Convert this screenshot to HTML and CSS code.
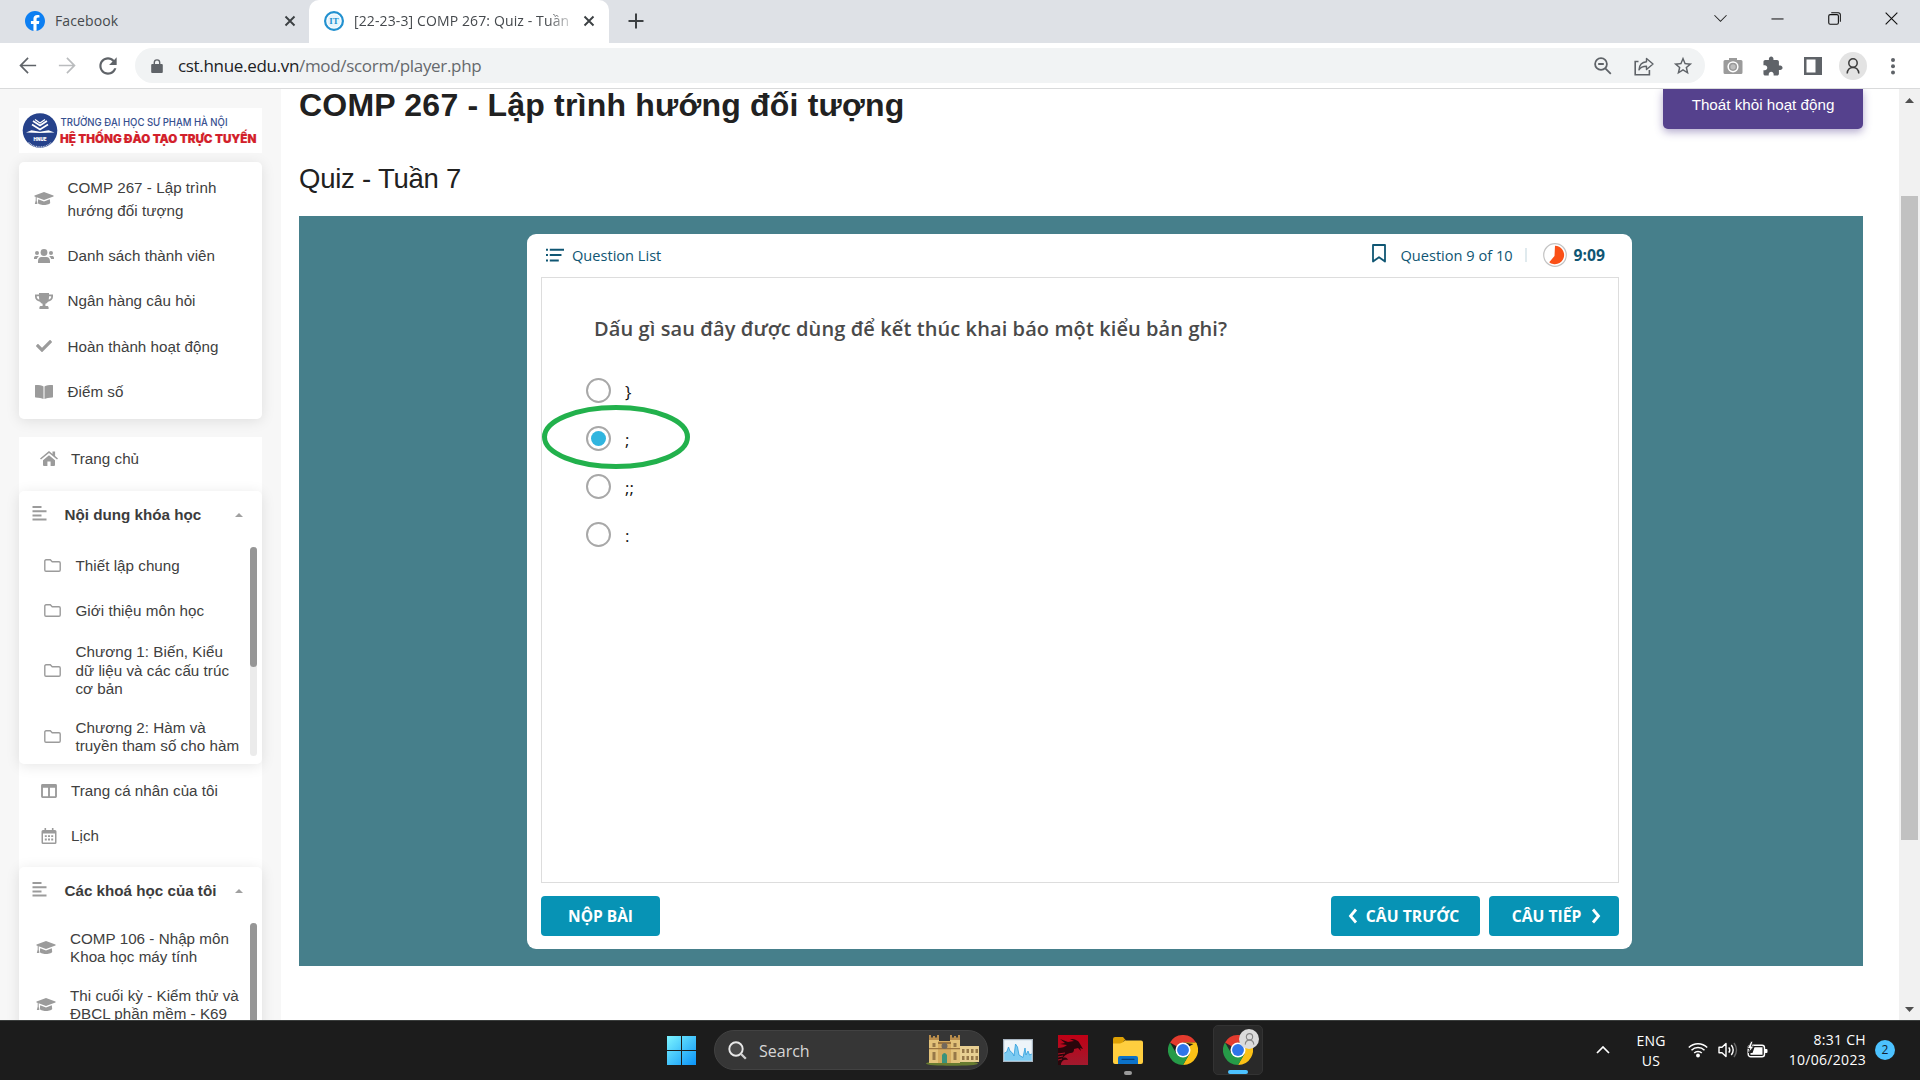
FILE: index.html
```html
<!DOCTYPE html>
<html lang="vi">
<head>
<meta charset="utf-8">
<title>[22-23-3] COMP 267: Quiz - Tuần 7</title>
<link rel="stylesheet" href="styles.css">
</head>
<body>
<svg class="defs" width="0" height="0" aria-hidden="true">
  <symbol id="cap" viewBox="0 0 20 14">
    <path d="M10 0 .6 3.6a.5.5 0 0 0 0 .9L10 8l9.4-3.5a.5.5 0 0 0 0-.9z"/>
    <path d="M4.2 7.2 10 9.4l5.8-2.2.4 3.5c0 1.2-2.8 2.2-6.2 2.2s-6.200-1-6.200-2.200z"/>
    <path d="M1.700 4.800h1v3.700l.7 3.500H.8l.9-3.500z"/>
  </symbol>
  <symbol id="folder" viewBox="0 0 17 13">
    <path d="M2 .8h4.300L8.200 2.700H15A1.200 1.200 0 0 1 16.200 3.900V11A1.200 1.200 0 0 1 15 12.200H2A1.200 1.200 0 0 1 .8 11V2A1.200 1.200 0 0 1 2 .8z" fill="none" stroke="currentColor" stroke-width="1.400"/>
  </symbol>
  <symbol id="lines" viewBox="0 0 14 15">
    <path d="M0 0h9v2H0zM0 4.200h14v2H0zM0 8.400h9v2H0zM0 12.600h14v2H0z"/>
  </symbol>
  <symbol id="person" viewBox="0 0 14 16">
    <circle cx="7" cy="5" r="4.200" fill="none" stroke="currentColor" stroke-width="1.500"/>
    <path d="M1.200 15.500c.3-4 2.200-6 5.800-6s5.500 2 5.800 6" fill="none" stroke="currentColor" stroke-width="1.500"/>
  </symbol>
  <symbol id="close" viewBox="0 0 12 12">
    <path d="M1.500 1.500l9 9M10.500 1.500l-9 9" fill="none" stroke="currentColor" stroke-width="1.900"/>
  </symbol>
  <symbol id="chrome" viewBox="0 0 48 48">
    <path d="M24 24 3.200 12A24 24 0 0 1 44.800 12H24z" fill="#e33b2e"/>
    <path d="M24 24 44.800 12A24 24 0 0 1 24 48l10.400-18z" fill="#fbc116"/>
    <path d="M24 24 34.400 30 24 48A24 24 0 0 1 3.200 12l10.400 18z" fill="#269b48"/>
    <path d="M24 12h20.800a24 24 0 0 1 1.500 3z" fill="#fbc116"/>
    <circle cx="24" cy="24" r="12" fill="#fff"/>
    <circle cx="24" cy="24" r="9.500" fill="#2e75ea"/>
  </symbol>
</svg>

<header class="browser">
  <div class="tabstrip">
    <div class="tab">
      <svg class="favicon" viewBox="0 0 24 24"><circle cx="12" cy="12" r="11" fill="#fff"/><path fill="#0d7ff2" d="M24 12.070C24 5.400 18.630 0 12 0S0 5.400 0 12.070C0 18.100 4.390 23.100 10.130 24v-8.440H7.080v-3.490h3.040V9.410c0-3.020 1.800-4.700 4.540-4.700 1.310 0 2.680.24 2.680.24v2.970h-1.500c-1.500 0-1.960.93-1.960 1.890v2.260h3.330l-.53 3.490h-2.800V24C19.610 23.100 24 18.100 24 12.070z"/></svg>
      <span class="tab-title fb">Facebook</span>
      <svg class="tab-close"><use href="#close"/></svg>
    </div>
    <div class="tab active">
      <svg class="favicon" viewBox="0 0 20 20"><circle cx="10" cy="10" r="8.900" fill="#fff" stroke="#2291d0" stroke-width="2.200"/><circle cx="10" cy="10" r="6.800" fill="#e6f4fc"/><text x="10" y="13.300" text-anchor="middle" class="it-mark">IT</text></svg>
      <span class="tab-title">[22-23-3] COMP 267: Quiz - Tuần</span>
      <svg class="tab-close"><use href="#close"/></svg>
    </div>
    <svg class="newtab" viewBox="0 0 16 16"><path d="M8 .5v15M.5 8h15" stroke="#3c4043" stroke-width="2"/></svg>
    <div class="winctl">
      <svg viewBox="0 0 14 14"><path d="M.5 3.500 7 10l6.500-6.500" fill="none" stroke="#222" stroke-width="1.100"/></svg>
      <svg viewBox="0 0 14 14"><path d="M.5 7.500h13" stroke="#111" stroke-width="1.100"/></svg>
      <svg viewBox="0 0 14 14"><rect x=".8" y="2.800" width="10.400" height="10.400" rx="1.600" fill="none" stroke="#111" stroke-width="1.200"/><path d="M3.500.7H11a2.300 2.300 0 0 1 2.300 2.300v7.500" fill="none" stroke="#111" stroke-width="1.100"/></svg>
      <svg viewBox="0 0 14 14"><path d="M.7.7l12.600 12.600M13.300.7.7 13.300" stroke="#111" stroke-width="1.200"/></svg>
    </div>
  </div>
  <div class="toolbar">
    <svg class="nav" viewBox="0 0 24 24"><path fill="#5f6368" d="M21 11.100H6.800l6.400-6.400L12 3.500 3.500 12l8.500 8.500 1.200-1.200-6.400-6.400H21z"/></svg>
    <svg class="nav" viewBox="0 0 24 24"><path fill="#babcbe" d="M3 11.100h14.200l-6.400-6.400L12 3.500l8.500 8.500-8.500 8.500-1.200-1.200 6.400-6.400H3z"/></svg>
    <svg class="nav" viewBox="0 0 24 24"><path fill="#5f6368" d="M17.650 6.350C16.200 4.900 14.210 4 12 4c-4.420 0-7.990 3.580-7.990 8s3.570 8 7.990 8c3.730 0 6.840-2.550 7.730-6h-2.080c-.82 2.330-3.040 4-5.650 4-3.310 0-6-2.690-6-6s2.690-6 6-6c1.660 0 3.140.69 4.220 1.780L13 11h7V4l-2.350 2.350z"/></svg>
    <div class="omnibox">
      <svg class="lock" viewBox="0 0 12 14"><path fill="#5f6368" d="M1.200 5H2.600V3.600a3.400 3.400 0 0 1 6.800 0V5h1.400A1 1 0 0 1 11.800 6v7a1 1 0 0 1-1 1H1.200a1 1 0 0 1-1-1V6a1 1 0 0 1 1-1zM4 5h4V3.600a2 2 0 0 0-4 0z"/></svg>
      <span class="url"><b>cst.hnue.edu.vn</b>/mod/scorm/player.php</span>
      <svg class="oi" viewBox="0 0 20 20"><g fill="none" stroke="#5f6368" stroke-width="1.800"><circle cx="8" cy="8" r="5.900"/><path d="M12.300 12.300l5.500 5.500M5.200 8h5.600"/></g></svg>
      <svg class="oi" viewBox="0 0 20 20"><path d="M4.500 5.500H1.200v13.300h14.200V14" fill="none" stroke="#5f6368" stroke-width="1.600"/><path d="M12.500 2.500 19 8l-6.500 5.500v-3.200c-3.500 0-6 1-7.500 3.500.3-4.500 2.700-7.600 7.500-8z" fill="none" stroke="#5f6368" stroke-width="1.400" stroke-linejoin="round"/></svg>
      <svg class="oi star" viewBox="0 0 24 24"><path fill="#5f6368" d="M22 9.240l-7.190-.62L12 2 9.190 8.630 2 9.240l5.460 4.730L5.820 21 12 17.270 18.180 21l-1.630-7.030L22 9.240zM12 15.400l-3.760 2.270 1-4.280-3.320-2.880 4.380-.38L12 6.100l1.710 4.040 4.380.38-3.320 2.880 1 4.280L12 15.400z"/></svg>
    </div>
    <div class="exts">
      <svg viewBox="0 0 20 20"><path d="M2 4h4V2h8v2h4a1.500 1.500 0 0 1 1.500 1.500v11A1.500 1.500 0 0 1 18 18H2A1.500 1.500 0 0 1 .5 16.500v-11A1.500 1.500 0 0 1 2 4z" fill="#9b9b9b"/><circle cx="10" cy="10.800" r="5.600" fill="#fff"/><circle cx="10" cy="10.800" r="4.100" fill="#9b9b9b"/><circle cx="10" cy="10.800" r="2.600" fill="#fff" opacity=".35"/></svg>
      <svg viewBox="1.500 .5 22 22"><path fill="#5f6368" d="M20.500 11H19V7c0-1.100-.9-2-2-2h-4V3.500C13 2.120 11.880 1 10.500 1S8 2.120 8 3.500V5H4c-1.100 0-1.990.9-1.990 2v3.800H3.500c1.490 0 2.700 1.210 2.700 2.700s-1.210 2.700-2.700 2.700H2V20c0 1.100.9 2 2 2h3.800v-1.500c0-1.490 1.210-2.700 2.700-2.700 1.490 0 2.700 1.210 2.700 2.700V22H17c1.100 0 2-.9 2-2v-4h1.500c1.380 0 2.500-1.120 2.500-2.500S21.880 11 20.500 11z"/></svg>
      <svg viewBox="0 0 20 20"><path fill="#5f6368" fill-rule="evenodd" d="M1 1h18v18H1zM3.500 3.500v13h9v-13z"/></svg>
      <span class="profile"><svg><use href="#person"/></svg></span>
      <svg viewBox="0 0 20 20"><g fill="#5f6368"><circle cx="10" cy="4" r="2"/><circle cx="10" cy="10.200" r="2"/><circle cx="10" cy="16.400" r="2"/></g></svg>
    </div>
  </div>
</header>

<div class="viewport">
  <aside class="sidebar">
    <div class="brand">
      <svg width="243" height="45" viewBox="0 0 243 45">
        <circle cx="21" cy="22.500" r="17.300" fill="#26428b"/>
        <g fill="none" stroke="#fff" stroke-width="1.700"><path d="M14 13l7 4.500 7-4.500M13 16.500l8 5 8-5"/><path d="M16 11.500l5 3.500 5-3.500" stroke-width="1.200"/></g>
        <path d="M7 24.500l5.500-2.200 8.500 1.400 8.500-1.400 6 2.200-14.500.6z" fill="#fff"/>
        <text x="21" y="32.800" text-anchor="middle" class="crest">HNUE</text>
        <path d="M9.500 34.500a17 17 0 0 0 23 0" fill="none" stroke="#fff" stroke-width="1.300" stroke-dasharray="1 .7" opacity=".75"/>
        <text x="41.500" y="18" textLength="167" lengthAdjust="spacingAndGlyphs" class="brand-a">TRƯỜNG ĐẠI HỌC SƯ PHẠM HÀ NỘI</text>
        <text x="41" y="34.500" textLength="196.500" lengthAdjust="spacingAndGlyphs" class="brand-b">HỆ THỐNG ĐÀO TẠO TRỰC TUYẾN</text>
      </svg>
    </div>

    <nav class="card course">
      <a class="two"><svg class="ic"><use href="#cap"/></svg><span>COMP 267 - Lập trình<br>hướng đối tượng</span></a>
      <a><svg class="ic" viewBox="0 0 20 14"><circle cx="10" cy="3.500" r="3.400"/><circle cx="3" cy="4" r="2"/><circle cx="17" cy="4" r="2"/><path d="M4 14v-1.800C4 9.500 5.500 8 7.500 8h5C14.500 8 16 9.500 16 12.200V14zM0 10V8.800C0 7.500 1 7 2 7h2.200l.6.500C3.600 8.300 3.100 9 2.900 10zM20 10V8.800c0-1.300-1-1.800-2-1.800h-2.200l-.6.500c1.200.8 1.700 1.500 1.900 2.500z"/></svg><span>Danh sách thành viên</span></a>
      <a><svg class="ic tall" viewBox="0 0 18 16"><path d="M4 0h10v1.500h4v2.300c0 2.500-2 4.300-5 4.900-.8 1.200-1.700 1.900-2.600 2.100V13H12c1 0 1.600.7 1.600 1.700V16H4.400v-1.300C4.400 13.700 5 13 6 13h1.600v-2.200C6.700 10.600 5.800 9.900 5 8.700 2 8.100 0 6.300 0 3.800V1.500h4zM1.800 3.200v.7c0 1.100.9 2.200 2.500 2.700C4.100 5.600 4 4.500 4 3.200zm14.400 0H14c0 1.300-.1 2.400-.3 3.400 1.600-.5 2.500-1.600 2.500-2.700z"/></svg><span>Ngân hàng câu hỏi</span></a>
      <a><svg class="ic tall" viewBox="0 0 512 512"><path d="M173.898 439.404l-166.400-166.400c-9.997-9.997-9.997-26.206 0-36.204l36.203-36.204c9.997-9.998 26.207-9.998 36.204 0L192 312.690 432.095 72.596c9.997-9.997 26.207-9.997 36.204 0l36.203 36.204c9.997 9.997 9.997 26.206 0 36.204l-294.400 294.401c-9.998 9.997-26.207 9.997-36.204-.001z"/></svg><span>Hoàn thành hoạt động</span></a>
      <a><svg class="ic" viewBox="0 0 18 14"><path d="M8.500 14V1.400C7 .4 4 0 .6 0A.6.6 0 0 0 0 .6v11.200c0 .4.2.6.6.6C4 12.600 6.800 13.100 8.500 14zM9.500 14V1.400C11 .4 14 0 17.400 0a.6.6 0 0 1 .6.6v11.200c0 .4-.2.6-.6.6-3.400.2-6.200.7-7.900 1.600z"/></svg><span>Điểm số</span></a>
    </nav>

    <nav class="menu">
      <a class="top"><svg class="ic home" viewBox="0 0 18 15"><path d="M9 4.300l6 5V14a1 1 0 0 1-1 1h-3.400v-4.500H7.400V15H4a1 1 0 0 1-1-1V9.300z"/><path d="M9 0l3.500 2.900V.4h2.600V5L18 7.400l-1 1.200L9 2.100l-8 6.500-1-1.200z"/></svg><span>Trang chủ</span></a>

      <section class="card group">
        <h4><svg class="li"><use href="#lines"/></svg><span>Nội dung khóa học</span><i class="caret"></i></h4>
        <div class="scroller">
          <div class="list">
            <a class="r1"><svg class="fo"><use href="#folder"/></svg><span>Thiết lập chung</span></a>
            <a class="r1"><svg class="fo"><use href="#folder"/></svg><span>Giới thiệu môn học</span></a>
            <a class="r3"><svg class="fo"><use href="#folder"/></svg><span>Chương 1: Biến, Kiểu<br>dữ liệu và các cấu trúc<br>cơ bản</span></a>
            <a class="r2"><svg class="fo"><use href="#folder"/></svg><span>Chương 2: Hàm và<br>truyền tham số cho hàm</span></a>
          </div>
          <div class="track"><div class="thumb"></div></div>
        </div>
      </section>

      <a class="top mine"><svg class="ic" viewBox="0 0 17 15"><path fill-rule="evenodd" d="M1.500 0h14A1.500 1.500 0 0 1 17 1.500v12a1.500 1.500 0 0 1-1.500 1.500h-14A1.500 1.500 0 0 1 0 13.500v-12A1.500 1.500 0 0 1 1.500 0zM2 4v9h5.500V4zM9.500 4v9H15V4z"/></svg><span>Trang cá nhân của tôi</span></a>
      <a class="top cal"><svg class="ic tall" viewBox="0 0 15 16"><path fill-rule="evenodd" d="M3 0h1.600v2h5.800V0H12v2h1.500A1.500 1.500 0 0 1 15 3.500v11a1.500 1.500 0 0 1-1.500 1.500h-12A1.500 1.500 0 0 1 0 14.500v-11A1.500 1.500 0 0 1 1.500 2H3zM1.500 5.500v9h12v-9z"/><path d="M3.300 7.200h2v1.900h-2zM6.500 7.200h2v1.900h-2zM9.700 7.200h2v1.900h-2zM3.300 10.500h2v1.900h-2zM6.500 10.500h2v1.900h-2zM9.700 10.500h2v1.900h-2z"/></svg><span>Lịch</span></a>

      <section class="card group last">
        <h4><svg class="li"><use href="#lines"/></svg><span>Các khoá học của tôi</span><i class="caret"></i></h4>
        <div class="scroller">
          <div class="list caps">
            <a><svg class="ic"><use href="#cap"/></svg><span>COMP 106 - Nhập môn<br>Khoa học máy tính</span></a>
            <a><svg class="ic"><use href="#cap"/></svg><span>Thi cuối kỳ - Kiểm thử và<br>ĐBCL phần mềm - K69</span></a>
          </div>
          <div class="track"><div class="thumb full"></div></div>
        </div>
      </section>
    </nav>
  </aside>

  <main class="content">
    <div class="headrow">
      <h1>COMP 267 - Lập trình hướng đối tượng</h1>
      <a class="exit">Thoát khỏi hoạt động</a>
    </div>
    <h2>Quiz - Tuần 7</h2>
    <div class="player">
      <div class="quiz">
        <div class="quiz-head">
          <svg class="qlist" viewBox="0 0 20 15"><path fill="#0f5673" d="M0 .5h2.200v2.200H0zM4.200.5H20v2.200H4.200zM0 6.500h2.200v2.200H0zM4.200 6.500h13v2.200h-13zM0 12.500h2.200v2.200H0zM4.200 12.500h10v2.200h-10z"/></svg>
          <span class="ql">Question List</span>
          <svg class="bm" viewBox="0 0 14 19"><path d="M1 1h12v16.500l-6-4.300-6 4.300z" fill="none" stroke="#0f5673" stroke-width="1.800" stroke-linejoin="round"/></svg>
          <span class="qn">Question 9 of 10</span>
          <i class="sep"></i>
          <svg class="pie" viewBox="0 0 24 24"><circle cx="12" cy="12" r="11.300" fill="#fff" stroke="#c4c4c4" stroke-width="1.200"/><path d="M12 2.800a9.200 9.200 0 1 1-5.800 16.400L11.500 13z" fill="#fa5017"/></svg>
          <b class="clock">9:09</b>
        </div>
        <div class="slide">
          <p class="question">Dấu gì sau đây được dùng để kết thúc khai báo một kiểu bản ghi?</p>
          <div class="options">
            <label><i class="radio"></i>}</label>
            <label><i class="radio on"></i>;</label>
            <label><i class="radio"></i>;;</label>
            <label><i class="radio"></i>:</label>
          </div>
          <svg class="marker" width="150" height="66" viewBox="0 0 150 66"><ellipse cx="75" cy="33" rx="71.500" ry="29.500" fill="none" stroke="#22b14c" stroke-width="5"/></svg>
        </div>
        <div class="quiz-foot">
          <span class="btn submit">NỘP BÀI</span>
          <span class="btn prev"><svg viewBox="0 0 10 16"><path d="M8 1.500 2.500 8 8 14.500" fill="none" stroke="#fff" stroke-width="2.800"/></svg>CÂU TRƯỚC</span>
          <span class="btn next">CÂU TIẾP<svg viewBox="0 0 10 16"><path d="M2 1.500 7.500 8 2 14.500" fill="none" stroke="#fff" stroke-width="2.800"/></svg></span>
        </div>
      </div>
    </div>
  </main>

  <div class="vscroll">
    <svg viewBox="0 0 9 5"><path d="M0 5 4.500 0 9 5z" fill="#505050"/></svg>
    <div class="vthumb"></div>
    <svg viewBox="0 0 9 5"><path d="M0 0l4.500 5L9 0z" fill="#505050"/></svg>
  </div>
</div>

<footer class="taskbar">
  <div class="apps">
    <svg class="win" viewBox="0 0 29 29"><defs><linearGradient id="wg" x1="0" y1="0" x2="1" y2="1"><stop offset="0" stop-color="#7df5ff"/><stop offset="1" stop-color="#0a93f8"/></linearGradient></defs><path fill="url(#wg)" d="M0 0h14v14H0zM15 0h14v14H15zM0 15h14v14H0zM15 15h14v14H15z"/></svg>
    <div class="search">
      <svg class="mag" viewBox="0 0 19 19"><circle cx="8" cy="8" r="6.700" fill="#4a4a4a" stroke="#e8e8e8" stroke-width="1.900"/><path d="M12.800 12.800l5 5" stroke="#d0d0d0" stroke-width="2.300"/></svg>
      <span>Search</span>
      <svg class="castle" viewBox="0 0 54 32"><ellipse cx="26" cy="29.500" rx="26" ry="2.300" fill="#687c30"/><path d="M3 6h10v23H3zM24 6h10v23H24z" fill="#e3c27a"/><path d="M3 6V1h2v2.500h2V2h2v1.500h2V1h2v5zM24 6V1h2v2.500h2V2h2v1.500h2V1h2v5z" fill="#b98d4c"/><path d="M12 7h13v22H12z" fill="#d4ab60"/><path d="M12 8h13v2H12zM3 14h31v1.200H3zM34 13h19v1H34z" fill="#9a7440"/><path d="M34 12h19v16H34z" fill="#e8cf92"/><circle cx="18.500" cy="12" r="3" fill="#71685c"/><path d="M16 21q2.500-4 5 0v8h-5z" fill="#3a927b"/><path d="M6.500 9h3v4h-3zM27.500 9h3v4h-3zM6.500 18h3v8h-3zM27.500 18h3v8h-3zM36 15h2.500v4H36zM40.500 15H43v4h-2.500zM45 15h2.500v4H45zM49.500 15H52v4h-2.500zM36 22h2.500v4H36zM40.500 22H43v4h-2.500zM45 22h2.500v4H45zM49.500 22H52v4h-2.500z" fill="#967849"/></svg>
    </div>
    <svg class="perf" viewBox="0 0 30 23"><rect width="30" height="23" fill="#a9b6c2"/><rect x="1.200" y="1.200" width="27.600" height="20.600" fill="#edf4f9"/><path d="M1.200 21.800V14l2.500-1 1.800-5L7 12l2.500 2 1.500 3 1.500-12 2 3 1.500 8 4 2.500L22 9l1 7 2-4 1.500 4 2.300-1v6.800z" fill="#7dcbf2"/><path d="M1.500 14l2.200-1 1.800-5L7 12l2.500 2 1.500 3 1.500-12 2 3 1.500 8 4 2.500L22 9l1 7 2-4 1.500 4 2.300-1" fill="none" stroke="#2e9ddc" stroke-width=".8"/></svg>
    <svg class="msi" viewBox="0 0 30 30"><defs><linearGradient id="rg" x1="0" y1="0" x2="0" y2="1"><stop offset="0" stop-color="#c00015"/><stop offset="1" stop-color="#a11a2e"/></linearGradient></defs><rect width="30" height="30" fill="url(#rg)"/><path d="M0 13c4 0 7-1 9-3L2 9l5-1-5-4 8 3 6-1-4-2c6 0 9 2 10 5l3 5-3-1 1 3-3-3-4 1c0 3-1 4-4 4-4 1-6 3-7 5 3-1 4 0 5 2-4-1-7 1-7 5H0z" fill="#2a060b"/><path d="M0 19l7-1M0 22l5-1M0 25l4-1" stroke="#b01426" stroke-width="1"/></svg>
    <div class="app"><svg viewBox="0 0 30 27"><path d="M0 2a2 2 0 0 1 2-2h8l3 3.500h-2L9 9H0z" fill="#dda004"/><path d="M9.500 5.500 12 3.500h16A2 2 0 0 1 30 5.500V25a2 2 0 0 1-2 2H2a2 2 0 0 1-2-2V6.500h7z" fill="#ffce3f"/><path d="M5 27v-6a2 2 0 0 1 2-2h16a2 2 0 0 1 2 2v6z" fill="#0c72c9"/><path d="M9 22.300h12" stroke="#073f79" stroke-width="1.200" stroke-linecap="round"/></svg><i class="dot"></i></div>
    <svg class="chrome"><use href="#chrome"/></svg>
    <div class="app current"><svg class="chrome"><use href="#chrome"/></svg><span class="badge"><svg viewBox="0 0 14 16"><use href="#person" width="14" height="16"/></svg></span><i class="bar"></i></div>
  </div>
  <div class="tray">
    <svg class="up" viewBox="0 0 14 8"><path d="M1 7l6-6 6 6" fill="none" stroke="#fff" stroke-width="1.700"/></svg>
    <div class="lang"><span>ENG</span><span>US</span></div>
    <svg class="wifi" viewBox="0 0 20 16"><g fill="none" stroke="#fff" stroke-width="1.500"><path d="M.8 5.500a13 13 0 0 1 18.400 0M3.500 8.300a9.200 9.200 0 0 1 13 0M6.200 11a5.400 5.400 0 0 1 7.600 0"/></g><circle cx="10" cy="13.500" r="1.900" fill="#fff"/></svg>
    <svg class="vol" viewBox="0 0 20 16"><path d="M1 5.300h3L8 1.500v13l-4-3.800H1z" fill="none" stroke="#fff" stroke-width="1.400" stroke-linejoin="round"/><path d="M10.800 5.300q2 2.700 0 5.400M13.300 3q3.800 5 0 10" fill="none" stroke="#fff" stroke-width="1.400"/><path d="M16 1q5 7 0 14" fill="none" stroke="#666" stroke-width="1.400"/></svg>
    <svg class="bat" viewBox="0 0 21 17"><rect x="1.200" y="4.300" width="16.300" height="11.400" rx="2.500" fill="none" stroke="#fff" stroke-width="1.400"/><path d="M7.500 6.300h8v7.500h-12V12h2z" fill="#fff"/><path d="M18 8h1.500a1 1 0 0 1 1 1v2a1 1 0 0 1-1 1H18z" fill="#fff"/><path d="M4 .3.300 7.500h2.500L1.500 12 7 5.200H4.300L6 .3z" fill="#fff" stroke="#1c1c1c" stroke-width=".8"/></svg>
    <div class="when"><span>8:31 CH</span><span>10/06/2023</span></div>
    <span class="count">2</span>
  </div>
</footer>
</body>
</html>
```
FILE: styles.css
```css
* { box-sizing: border-box; }
body {
  margin: 0; width: 1920px; height: 1080px; overflow: hidden;
  display: flex; flex-direction: column; background: #fff;
  font-family: "Liberation Sans", Arial, sans-serif; color: #404040;
}
svg { display: block; flex: none; }
.defs { position: absolute; }
i { font-style: normal; }

/* browser chrome */
.browser { height: 89px; flex: none; font-family: "Open Sans", "Noto Sans", sans-serif; border-bottom: 1px solid #d9dadb; }
.tabstrip { height: 43px; background: #dee1e6; display: flex; align-items: center; }
.tab { width: 309px; height: 43px; padding: 0 13px 2px 25px; display: flex; align-items: center; flex: none; }
.tab.active { width: 300px; background: #fff; border-radius: 10px 10px 0 0; padding: 0 14px 2px 15px; }
.favicon { width: 20px; height: 20px; margin-right: 9px; }
.tab-title { flex: 1; font-size: 14px; letter-spacing: .12px; color: #45494d; white-space: nowrap; }
.tab-title.fb { letter-spacing: .1px; margin-left: 1px; }
.tab.active .tab-title { margin: 0 10px 0 1px; -webkit-mask-image: linear-gradient(90deg, #000 88%, transparent 102%); mask-image: linear-gradient(90deg, #000 88%, transparent 102%); }
.tab-close { width: 12px; height: 12px; color: #3c4043; }
.it-mark { font: bold 9px "Liberation Serif", serif; fill: #2291d0; }
.newtab { width: 16px; height: 16px; margin: 0 auto 2px 19px; }
.winctl { display: flex; gap: 44px; margin-right: 22.500px; padding-bottom: 6px; }
.winctl svg { width: 13px; height: 13px; }
.toolbar { height: 45px; display: flex; align-items: center; padding-left: 16px; }
.nav { width: 23px; height: 23px; margin-right: 17px; }
.nav + .nav + .nav { width: 26px; height: 26px; margin: 0 14px 0 -1px; }
.omnibox { width: 1570px; height: 35px; border-radius: 18px; background: #f1f3f4; display: flex; align-items: center; padding: 0 11.500px 0 16px; }
.lock { width: 12px; height: 14px; margin-right: 15px; }
.url { flex: 1; font-size: 17px; letter-spacing: -.32px; color: #66696d; }
.url b { font-weight: 400; color: #202124; }
.oi { width: 20px; height: 20px; margin-left: 20px; }
.oi + .oi { margin-left: 21px; }
.oi + .star { width: 22px; height: 22px; margin-left: 18px; }
.exts { display: flex; align-items: center; margin-left: 17.500px; gap: 20px; }
.exts > svg { width: 20px; height: 20px; }
.profile { width: 28px; height: 28px; border-radius: 50%; background: #e3e3e3; display: grid; place-items: center; color: #3b3b3b; margin: 0 -4px 0 -4px; }
.profile svg { width: 14px; height: 16px; }

/* page viewport */
.viewport { flex: 1; min-height: 0; display: flex; overflow: hidden; }
.sidebar { width: 281px; flex: none; background: #f7f7f7; padding: 19px 19px 0; overflow: hidden; }
.brand { height: 45px; background: #fff; margin-bottom: 9px; }
.crest { font: 900 4.500px "Inter", sans-serif; fill: #fff; }
.brand-a { font: 500 10.800px "Inter", sans-serif; fill: #36508f; }
.brand-b { font: 900 11.800px "Inter", sans-serif; fill: #d31f2b; stroke: #d31f2b; stroke-width: .15px; }
.card { background: #fff; border-radius: 5px; box-shadow: 0 2px 14px rgba(0, 0, 0, .1); }
.sidebar a { display: flex; align-items: center; font-size: 15.200px; letter-spacing: .03px; color: #404040; white-space: nowrap; }
.ic { width: 20px; height: 14px; fill: #9b9b9b; color: #9b9b9b; }
.ic.tall { height: 16px; }
.course { height: 257px; padding: 7px 15px 0; margin-bottom: 18px; }
.course a { height: 45.300px; line-height: 23px; gap: 13.500px; }
.course a.two { height: 59px; margin-bottom: 5px; }
.menu { background: #fff; height: 700px; }
.menu .top { height: 45px; padding-left: 19.500px; gap: 12.500px; }
.menu .ic.home { height: 15px; }
.menu .top:first-child { height: 43px; margin-bottom: 11px; }
.group { height: 273px; }
.group h4 { margin: 0; height: 48px; display: flex; align-items: center; font-size: 15.200px; line-height: 20px; color: #3c3c3c; padding: 0 19px 0 13px; }
.group h4 span { flex: 1; margin-left: 17.500px; white-space: nowrap; }
.li { width: 15px; height: 15px; fill: #9b9b9b; margin-top: -4px; }
.caret { border: 4px solid transparent; border-top: 0; border-bottom: 4px solid #a0a0a0; }
.scroller { display: flex; padding: 8px 5px 0 0; height: 217px; }
.list { flex: 1; padding-left: 25px; }
.list a { gap: 14.500px; line-height: 18.400px; }
.fo { width: 17px; height: 13px; color: #9b9b9b; margin-top: -1px; }
.r1 { height: 52px; }
.r1:first-child { height: 38px; }
.r3 { height: 68px; }
.r2 { height: 64px; }
.track { width: 7px; height: 209px; border-radius: 4px; background: #ebebeb; }
.thumb { height: 120px; border-radius: 4px; background: #969696; }
.thumb.full { height: 200px; }
.top.mine { margin-top: 4px; }
.top.cal { margin-bottom: 9px; }
.list.caps { padding-left: 17px; }
.list.caps a { height: 64px; gap: 14px; }
.list.caps a:first-child { height: 50px; }

/* main column */
.content { width: 1618px; flex: none; padding: 0 36px 0 18px; }
.headrow { display: flex; justify-content: space-between; height: 40px; }
h1 { margin: 0; font-size: 32px; line-height: 32px; letter-spacing: .21px; color: #212121; white-space: nowrap; }
.exit { width: 200px; height: 40px; border-radius: 0 0 5px 5px; background: #55418d; color: #fff; font-size: 15.200px; line-height: 32px; text-align: center; box-shadow: 0 3px 9px rgba(85, 65, 141, .45); }
h2 { margin: 30px 0 17px; height: 40px; line-height: 40px; font-size: 27.500px; letter-spacing: -.23px; font-weight: 400; color: #212121; }
.player { height: 750px; background: #467f8b; padding: 18px 231px 17px 228px; }
.quiz { height: 715px; background: #fff; border-radius: 9px; padding: 0 13px 0 14px; font-family: "Open Sans", "Noto Sans", sans-serif; }
.quiz-head { height: 43px; display: flex; align-items: center; color: #0f5673; font-size: 14.600px; padding: 0 14px 2px 5px; }
.qlist { width: 18px; height: 14px; }
.ql { flex: 1; margin-left: 8px; }
.bm { width: 14px; height: 19px; margin: -3px 14px 0 0; }
.sep { width: 2px; height: 14px; background: #e0eaee; margin: 0 16px 0 12px; }
.pie { width: 24px; height: 24px; margin-right: 7px; }
.clock { font-size: 15.700px; }
.slide { height: 606px; border: 1px solid #ddd; position: relative; padding: 35px 0 0 43px; }
.question { margin: 0; padding-left: 9px; font-size: 20px; line-height: 32px; letter-spacing: .09px; font-weight: 600; color: #4a4a4a; white-space: nowrap; }
.options { margin-top: 22px; padding-left: 1px; }
.options label { display: flex; align-items: center; height: 48.100px; font-size: 17px; color: #111; }
.radio { width: 25px; height: 25px; border: 2px solid #a8a8a8; border-radius: 50%; margin: -1px 14px 0 0; display: grid; place-items: center; }
.radio.on::after { content: ""; width: 15px; height: 15px; border-radius: 50%; background: #30b5df; }
.marker { position: absolute; left: -1px; top: 126px; }
.quiz-foot { display: flex; padding-top: 13px; gap: 9px; }
.btn { height: 40px; border-radius: 4px; background: #0793b5; color: #fff; font-weight: 700; font-size: 15.700px; display: flex; align-items: center; justify-content: center; gap: 8px; white-space: nowrap; }
.btn svg { width: 10px; height: 16px; }
.submit { width: 119px; margin-right: auto; font-size: 15.500px; }
.prev { width: 149px; padding-right: 4px; letter-spacing: .05px; }
.next { width: 130px; gap: 10px; padding-left: 5px; }

.vscroll { width: 21px; background: #f1f1f1; display: flex; flex-direction: column; align-items: center; padding: 9px 0 8px; }
.vscroll svg { width: 9px; height: 5px; }
.vthumb { width: 17px; height: 644px; background: #c1c1c1; margin: 93px 0 auto; }

/* taskbar */
.taskbar { height: 60px; flex: none; background: #1c1c1c; border-top: 1px solid #3a3d3c; display: flex; align-items: center; justify-content: space-between; padding: 0 25px 1px 667px; color: #fff; font-family: "Open Sans", "Noto Sans", sans-serif; }
.apps { display: flex; align-items: center; }
.win { width: 29px; height: 29px; }
.search { width: 274px; height: 40px; margin: 0 15px 0 18px; border-radius: 20px; background: #363636; border: 1px solid #424242; display: flex; align-items: center; padding: 0 7px 0 13px; }
.mag { width: 19px; height: 19px; margin-right: 12px; }
.search span { flex: 1; font-size: 16px; color: #d6d6d6; padding-top: 1px; }
.castle { width: 54px; height: 32px; }
.perf { width: 30px; height: 23px; margin-right: 25px; }
.msi { width: 30px; height: 30px; margin-right: 15px; }
.app { width: 50px; height: 50px; display: grid; place-items: center; position: relative; margin-right: 15px; border-radius: 5px; }
.app > svg { width: 30px; height: 27px; }
.chrome, .app > svg.chrome { width: 30px; height: 30px; }
.app.current { background: #292929; border: 1px solid #333; margin: 0 0 0 15px; }
.dot, .bar { position: absolute; bottom: 0; left: 21px; width: 8px; height: 4px; border-radius: 2px; background: #9a9a9a; }
.bar { left: 14px; width: 20px; background: #4cc2ff; }
.badge { position: absolute; left: 25px; top: 3px; width: 20px; height: 20px; border-radius: 50%; background: #dcdcdc; display: grid; place-items: center; color: #888; }
.badge svg { width: 11px; height: 12px; }
.tray { display: flex; align-items: center; font-size: 14px; line-height: 20px; }
.up { width: 14px; height: 8px; margin-right: 24px; }
.lang, .when { display: flex; flex-direction: column; align-items: center; }
.lang { width: 34px; margin-right: 20px; letter-spacing: .2px; padding-top: 1px; }
.wifi { width: 20px; height: 16px; margin-right: 10px; }
.vol { width: 20px; height: 16px; margin-right: 9px; }
.bat { width: 21px; height: 17px; margin: -2px 20px 0 0; }
.when { width: 78px; align-items: flex-end; margin-right: 9px; white-space: nowrap; letter-spacing: .3px; }
.count { width: 20px; height: 20px; border-radius: 50%; background: #4cc2ff; color: #123; font-size: 12px; text-align: center; }
```
